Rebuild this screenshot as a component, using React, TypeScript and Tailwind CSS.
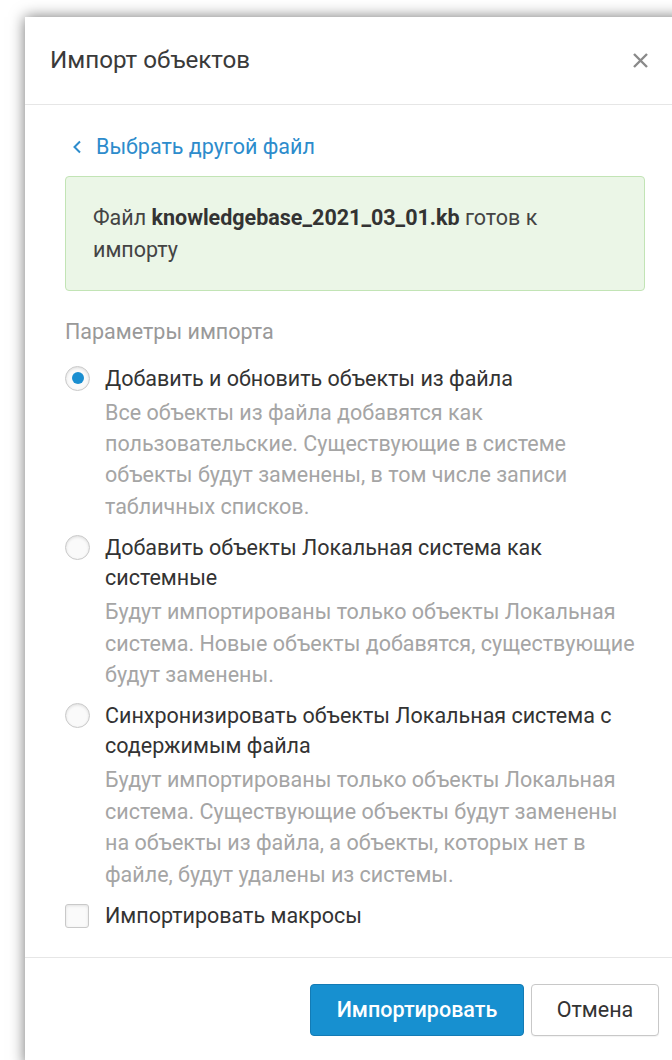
import React from "react";

const font = { fontFamily: "Roboto, 'Noto Sans', Arial, sans-serif" };

function Radio({ checked }: { checked?: boolean }) {
  return (
    <span className="mt-[2px] flex h-[25px] w-[25px] shrink-0 items-center justify-center rounded-full border border-[#c9c9c9] bg-[#fafafa] shadow-[inset_0_1px_3px_rgba(0,0,0,0.12)]">
      {checked && <span className="h-[12px] w-[12px] rounded-full bg-[#1a8ed0]" />}
    </span>
  );
}

type Option = {
  label: string;
  desc: string;
  checked?: boolean;
};

const options: Option[] = [
  {
    label: "Добавить и обновить объекты из файла",
    desc: "Все объекты из файла добавятся как пользовательские. Существующие в системе объекты будут заменены, в том числе записи табличных списков.",
    checked: true,
  },
  {
    label: "Добавить объекты Локальная система как системные",
    desc: "Будут импортированы только объекты Локальная система. Новые объекты добавятся, существующие будут заменены.",
  },
  {
    label: "Синхронизировать объекты Локальная система с содержимым файла",
    desc: "Будут импортированы только объекты Локальная система. Существующие объекты будут заменены на объекты из файла, а объекты, которых нет в файле, будут удалены из системы.",
  },
];

export default function App() {
  return (
    <div className="h-[1060px] w-[672px] overflow-hidden bg-white" style={font}>
      <div className="ml-[25px] mt-[17px] w-[660px] bg-white shadow-[0_0_14px_rgba(0,0,0,0.55)]">
        {/* header */}
        <div className="flex h-[88px] items-center justify-between border-b border-[#e6e6e6] pl-[25px] pr-[36px]">
          <h1 className="text-[24.2px] font-normal text-[#3a3a3a]">Импорт объектов</h1>
          <svg width="17" height="17" viewBox="0 0 17 17" className="text-[#8a8a8a]">
            <path d="M2 2 L15 15 M15 2 L2 15" stroke="currentColor" strokeWidth="2.4" strokeLinecap="butt" />
          </svg>
        </div>

        {/* body */}
        <div className="px-[40px] pb-[26px] pt-[26px] text-[21.5px] leading-[31.4px]">
          <a className="flex items-center gap-[14px] pl-[7px] text-[#2d8ccc]">
            <svg width="10" height="14" viewBox="0 0 10 14">
              <path d="M8 1.5 L2.5 7 L8 12.5" fill="none" stroke="currentColor" strokeWidth="2" />
            </svg>
            <span>Выбрать другой файл</span>
          </a>

          <p className="mt-[14px] rounded-[4px] border border-[#c2e4b5] bg-[#ebf6e7] px-[27px] py-[25px] text-[#444]">
            <span>Файл </span>
            <b className="font-bold text-[#333]">knowledgebase_2021_03_01.kb</b>
            <span> готов к </span>
            <span>импорту</span>
          </p>

          <div className="mt-[25px] text-[#999]">Параметры импорта</div>

          <div className="mt-[16px] flex flex-col gap-[11px]">
            {options.map((o, i) => (
              <label key={i} className="flex gap-[15px]">
                <Radio checked={o.checked} />
                <div className="flex flex-col gap-[3px]">
                  <span className="leading-[30px] text-[#333]">{o.label}</span>
                  <span className="text-[#a5a5a5]">{o.desc}</span>
                </div>
              </label>
            ))}
            <label className="flex items-center gap-[16px]">
              <span className="h-[24px] w-[24px] shrink-0 rounded-[3px] border border-[#c9c9c9] bg-[#fafafa] shadow-[inset_0_1px_3px_rgba(0,0,0,0.1)]" />
              <span className="leading-[30px] text-[#333]">Импортировать макросы</span>
            </label>
          </div>
        </div>

        {/* footer */}
        <div className="flex justify-end gap-[7px] border-t border-[#e6e6e6] pb-[30px] pl-[40px] pr-[26px] pt-[26px] text-[21.5px]">
          <button className="h-[52px] w-[214px] rounded-[4px] border border-[#137bb5] bg-[#1790d0] font-medium text-white">
            Импортировать
          </button>
          <button className="h-[52px] w-[128px] rounded-[4px] border border-[#c8c8c8] bg-white text-[#333] shadow-[0_1px_1px_rgba(0,0,0,0.05)]">
            Отмена
          </button>
        </div>
      </div>
    </div>
  );
}
